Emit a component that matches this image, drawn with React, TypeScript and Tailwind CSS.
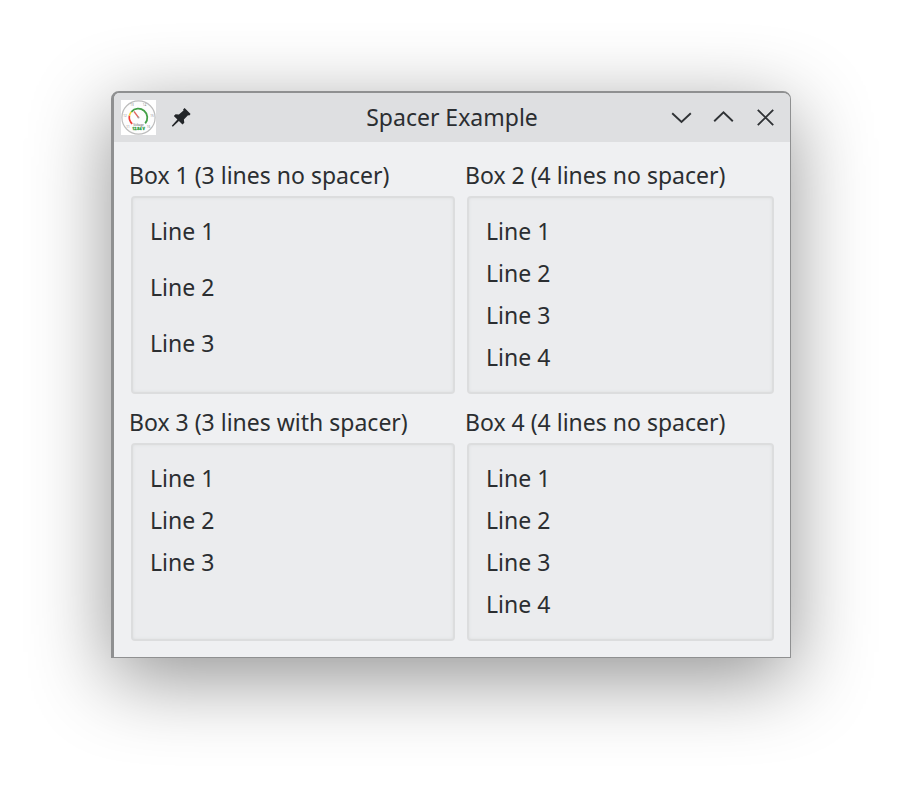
type Box = { title: string; lines: number; spacer?: boolean };

const boxes: Box[] = [
  { title: "Box 1 (3 lines no spacer)", lines: 3 },
  { title: "Box 2 (4 lines no spacer)", lines: 4 },
  { title: "Box 3 (3 lines with spacer)", lines: 3, spacer: true },
  { title: "Box 4 (4 lines no spacer)", lines: 4 },
];

const gaugeMarks = [
  { value: 11, x: 7, y: 28 },
  { value: 12, x: 4, y: 16.5 },
  { value: 13, x: 11, y: 6 },
  { value: 14, x: 23.5, y: 6 },
  { value: 15, x: 31, y: 16.5 },
  { value: 16, x: 27.5, y: 28 },
];

function GaugeIcon() {
  return (
    <svg viewBox="0 0 35 35" className="size-[35px] bg-white" role="img" aria-label="Gauge">
      <circle cx="17.5" cy="17.5" r="16.6" fill="#fdfdfd" stroke="#bdbdbd" strokeWidth="1.2" />
      <path d="M11.2 23.8 A9 9 0 0 1 8.4 15.6" fill="none" stroke="#f0403a" strokeWidth="1.7" />
      <path d="M8.4 15.6 A9 9 0 0 1 10.4 11.8" fill="none" stroke="#f3d63c" strokeWidth="1.7" />
      <path d="M10.4 11.8 A9 9 0 0 1 24.2 23.4" fill="none" stroke="#43a047" strokeWidth="1.8" />
      <path d="M17.5 17.5 L13 11.5" stroke="#e0655e" strokeWidth="1.3" />
      <circle cx="17.5" cy="17.5" r="1" fill="#a89a9a" />
      <g fill="#858585" fontSize="3" textAnchor="middle">
        {gaugeMarks.map((m) => (
          <text key={m.value} x={m.x} y={m.y}>
            {m.value}
          </text>
        ))}
        <text x="17.5" y="26" fill="#555">
          Voltage
        </text>
      </g>
      <text x="17.5" y="30.2" fill="#35a146" stroke="#35a146" strokeWidth="0.3" fontSize="3.6" fontWeight="700" textAnchor="middle">
        12.84 V
      </text>
    </svg>
  );
}

function PinIcon() {
  return (
    <svg viewBox="0 0 20 20" className="size-5" fill="#232629" aria-hidden="true">
      <path d="M13.6 0 L19.6 6 L18.2 7.6 L17 7.2 L12.9 11.6 L13.3 14.8 L11.5 16.6 L7.9 13 L1.8 18.8 L0.8 17.8 L6.4 11.5 L2.8 7.9 L4.6 6.3 L7.9 6.6 L12.5 2.6 L12.1 1.4 Z" />
    </svg>
  );
}

const controls = [
  { name: "Minimize", d: "M1.2 6.2 L10.5 15 L19.8 6.2" },
  { name: "Maximize", d: "M1.2 14.2 L10.5 5.2 L19.8 14.2" },
  { name: "Close", d: "M2.8 2.8 L18.2 18.2 M18.2 2.8 L2.8 18.2" },
];

function TitleBar() {
  return (
    <header className="grid h-[49px] grid-cols-[1fr_auto_1fr] items-center bg-[#dedfe1] px-[7px]">
      <div className="flex items-center gap-[15px]">
        <GaugeIcon />
        <button type="button" aria-label="Keep above others">
          <PinIcon />
        </button>
      </div>
      <h1 className="pb-0.5 text-[23px] leading-[30px]">Spacer Example</h1>
      <div className="flex justify-end gap-[21px] pr-[7px]">
        {controls.map((c) => (
          <button key={c.name} type="button" aria-label={c.name}>
            <svg viewBox="0 0 21 21" className="size-[21px]" fill="none" stroke="#303336" strokeWidth="1.9">
              <path d={c.d} />
            </svg>
          </button>
        ))}
      </div>
    </header>
  );
}

function GroupBox({ title, lines, spacer }: Box) {
  return (
    <section>
      <h2 className="-ml-0.5 text-[23px] leading-[30px] whitespace-nowrap">{title}</h2>
      <div className="mt-1.5 flex h-[198px] flex-col rounded border-2 border-[#dcddde] bg-[#ebecee] px-[17px] pt-3 pb-3.5 shadow-[inset_0_0_3px_#dcddde]">
        {Array.from({ length: lines }, (_, i) => (
          <p key={i} className={spacer ? "text-[23px] leading-[42px]" : "flex-1 text-[23px] leading-[42px]"}>
            Line {i + 1}
          </p>
        ))}
        {spacer && <div className="flex-1" />}
      </div>
    </section>
  );
}

export default function App() {
  return (
    <div className="min-h-screen bg-white pt-[91px] pr-28 pl-[111px] font-['Noto_Sans',sans-serif] text-[#2b2e31]">
      <main className="overflow-hidden rounded-t-lg border border-t-2 border-l-[3px] border-[#8f9091] bg-[#eff0f2] shadow-[0_20px_80px_rgba(0,0,0,0.43)]">
        <TitleBar />
        <div className="grid grid-cols-[324fr_307fr] gap-x-3 gap-y-[13px] pt-[18px] pr-4 pb-4 pl-[17px]">
          {boxes.map((b) => (
            <GroupBox key={b.title} {...b} />
          ))}
        </div>
      </main>
    </div>
  );
}
